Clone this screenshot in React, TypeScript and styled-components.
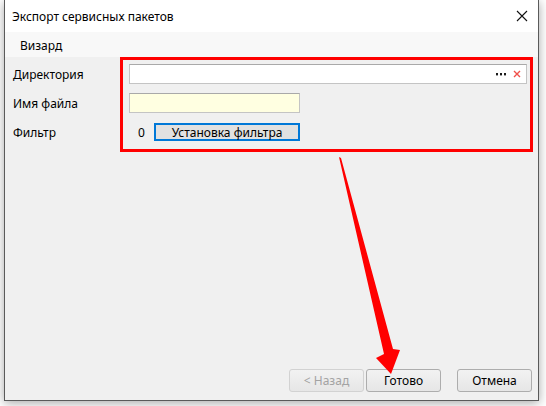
import React, { FC } from 'react';
import styled, { createGlobalStyle } from 'styled-components';

const GlobalStyle = createGlobalStyle`
  html, body {
    margin: 0;
    padding: 0;
    background: #ffffff;
    font-family: "Segoe UI", "Noto Sans", "Liberation Sans", sans-serif;
    font-size: 12px;
    color: #000;
  }
`;

const StyledPage = styled.div`
  position: relative;
  width: 546px;
  height: 406px;
  overflow: hidden;
`;

const StyledWindow = styled.div`
  margin-left: 4px;
  width: 533px;
  height: 400px;
  border: 1px solid #5a5a5a;
  border-top: none;
  background: #f0f0f0;
  display: flex;
  flex-direction: column;
  box-shadow: 0 2px 10px rgba(0, 0, 0, 0.35);
`;

const StyledTitleBar = styled.div`
  height: 32px;
  background: #ffffff;
  display: flex;
  align-items: center;
  justify-content: space-between;
  padding: 0 8px 0 7px;
  font-size: 12px;
`;

const StyledCloseIcon = styled.svg`
  width: 12px;
  height: 12px;
  margin-right: 2px;
`;

const StyledWizardBar = styled.div`
  height: 25px;
  background: #f8f8f8;
  display: flex;
  align-items: center;
  padding: 1px 0 0 15px;
  box-sizing: border-box;
`;

const StyledBody = styled.div`
  flex: 1;
  display: flex;
  flex-direction: column;
  padding: 7px 6px 8px 8px;
`;

const StyledForm = styled.div`
  display: grid;
  grid-template-columns: 116px 1fr;
  grid-auto-rows: 20px;
  row-gap: 9px;
  align-items: center;
  padding-right: 5px;
`;

const StyledLabel = styled.div`
  line-height: 20px;
  padding-top: 1px;
`;

const StyledInput = styled.div<{ $width?: number; $bg?: string }>`
  box-sizing: border-box;
  height: 20px;
  width: ${p => (p.$width ? `${p.$width}px` : '100%')};
  background: ${p => p.$bg || '#ffffff'};
  border: 1px solid #c4c4c4;
  border-top-color: #a9a9a9;
  display: flex;
  align-items: center;
  justify-content: flex-end;
  padding-right: 5px;
  gap: 7px;
`;

const StyledFilterCell = styled.div`
  display: flex;
  align-items: center;
`;

const StyledCount = styled.span`
  width: 25px;
  text-align: center;
`;

const StyledFilterButton = styled.div`
  box-sizing: border-box;
  width: 146px;
  height: 18px;
  border: 2px solid #0078d7;
  background: #e1e1e1;
  display: flex;
  align-items: center;
  justify-content: center;
`;

const StyledFooter = styled.div`
  margin-top: auto;
  display: flex;
  justify-content: flex-end;
  gap: 2px;
`;

const StyledButton = styled.div<{ $disabled?: boolean; $gapLeft?: number }>`
  box-sizing: border-box;
  width: 75px;
  height: 23px;
  margin-left: ${p => p.$gapLeft || 0}px;
  border: 1px solid ${p => (p.$disabled ? '#d2d2d2' : '#adadad')};
  border-radius: 3px;
  background: linear-gradient(#f2f2f2, #e6e6e6);
  color: ${p => (p.$disabled ? '#a3a3a3' : '#000')};
  display: flex;
  align-items: center;
  justify-content: center;
`;

const StyledHighlight = styled.div`
  position: absolute;
  left: 120px;
  top: 57px;
  width: 407px;
  height: 89px;
  border: 3px solid #ff0000;
  pointer-events: none;
`;

const StyledArrow = styled.svg`
  position: absolute;
  left: 0;
  top: 0;
  pointer-events: none;
`;

const App: FC = () => (
  <>
    <GlobalStyle />
    <StyledPage>
      <StyledWindow>
        <StyledTitleBar>
          <span>Экспорт сервисных пакетов</span>
          <StyledCloseIcon viewBox="0 0 12 12">
            <path d="M1 1 L11 11 M11 1 L1 11" stroke="#111" strokeWidth="1.1" fill="none" />
          </StyledCloseIcon>
        </StyledTitleBar>
        <StyledWizardBar>Визард</StyledWizardBar>
        <StyledBody>
          <StyledForm>
            <StyledLabel>Директория</StyledLabel>
            <StyledInput>
              <svg width="10" height="3" viewBox="0 0 10 3">
                <rect x="0" y="0" width="2" height="2.4" fill="#1a1a1a" />
                <rect x="4" y="0" width="2" height="2.4" fill="#1a1a1a" />
                <rect x="8" y="0" width="2" height="2.4" fill="#1a1a1a" />
              </svg>
              <svg width="8" height="8" viewBox="0 0 8 8">
                <path d="M1 1 L7 7 M7 1 L1 7" stroke="#f0504a" strokeWidth="1.4" fill="none" />
              </svg>
            </StyledInput>
            <StyledLabel>Имя файла</StyledLabel>
            <StyledInput $width={171} $bg="#ffffe1" />
            <StyledLabel>Фильтр</StyledLabel>
            <StyledFilterCell>
              <StyledCount>0</StyledCount>
              <StyledFilterButton>Установка фильтра</StyledFilterButton>
            </StyledFilterCell>
          </StyledForm>
          <StyledFooter>
            <StyledButton $disabled>&lt; Назад</StyledButton>
            <StyledButton>Готово</StyledButton>
            <StyledButton $gapLeft={14}>Отмена</StyledButton>
          </StyledFooter>
        </StyledBody>
      </StyledWindow>
      <StyledHighlight />
      <StyledArrow width="546" height="406" viewBox="0 0 546 406">
        <polygon
          points="339,157 341,158 393,349 400,350 391,374 376,358 384,354"
          fill="#ff0000"
        />
      </StyledArrow>
    </StyledPage>
  </>
);

export default App;
